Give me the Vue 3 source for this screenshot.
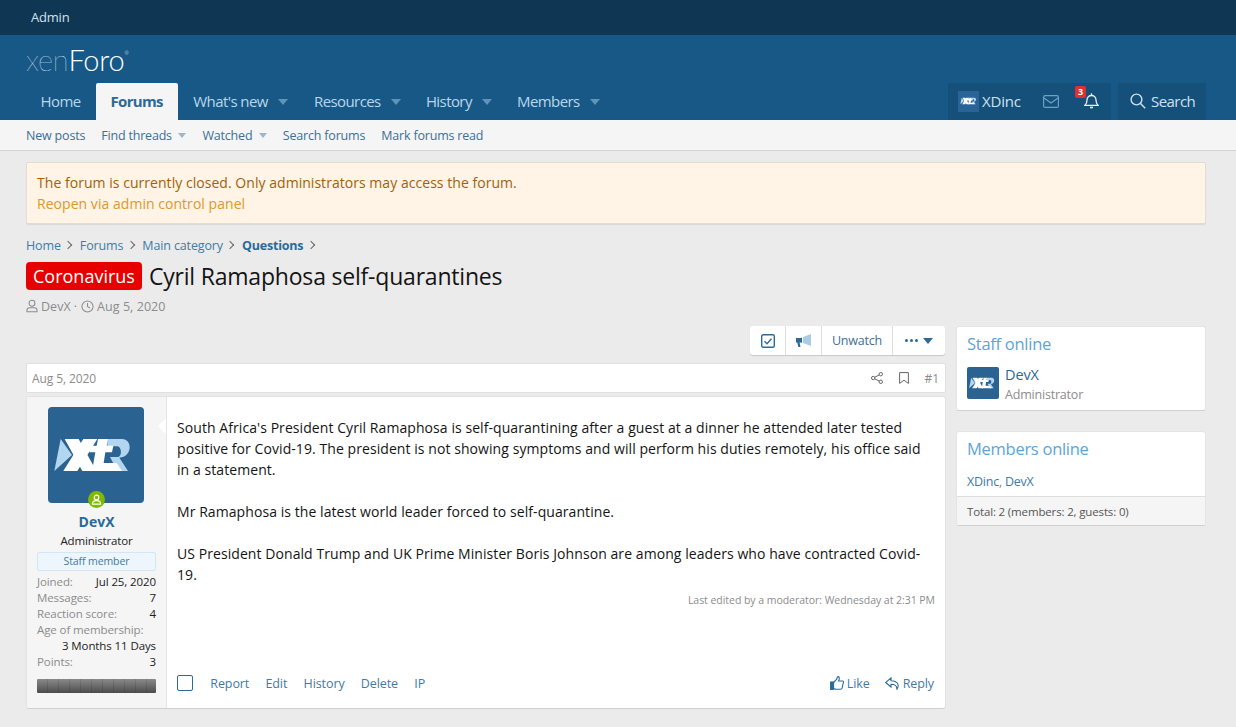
<script setup>
const nav = [
  { t: 'What\'s new' }, { t: 'Resources' }, { t: 'History' }, { t: 'Members' }
]
const stats = [
  ['Joined:', 'Jul 25, 2020'], ['Messages:', '7'], ['Reaction score:', '4']
]
</script>

<template>
  <div class="page">
    <div class="topbar"><span class="admin">Admin</span></div>
    <header class="head">
      <div class="logo"><span class="xen">xen</span>Foro<sup>®</sup></div>
      <div class="navrow">
        <nav class="nav">
          <a class="tab">Home</a>
          <a class="tab on">Forums</a>
          <a v-for="n in nav" :key="n.t" class="tab drop">{{ n.t }}<i class="caret"></i></a>
        </nav>
        <div class="tools">
          <div class="toolgrp">
            <span class="mini"><svg viewBox="0 0 288 288" width="20" height="20"><use href="#xtr" /></svg></span>
            <span class="uname">XDinc</span>
            <svg class="mail" width="16" height="13" viewBox="0 0 16 13" fill="none" stroke="#6f9fc2" stroke-width="1.2"><rect x=".6" y=".6" width="14.8" height="11.8" rx="1.5"/><path d="M1 3l7 5 7-5"/></svg>
            <span class="bell">
              <svg width="15" height="16" viewBox="0 0 15 16" fill="none" stroke="#e4eff7" stroke-width="1.3"><path d="M1 12.3c1.4-1.5 2-2.5 2-5.300 0-2.600 2-4.500 4.500-4.500S12 4.400 12 7c0 2.800.6 3.800 2 5.300z"/><path d="M6 14.500h3" stroke-width="1.600"/><path d="M7.500 .3v2"/></svg>
              <b class="badge">3</b>
            </span>
          </div>
          <div class="toolgrp search">
            <svg width="16" height="16" viewBox="0 0 16 16" fill="none" stroke="#cfe2f0" stroke-width="1.400"><circle cx="6.500" cy="6.500" r="5.400"/><path d="M10.500 10.500l4.700 4.700"/></svg>
            <span>Search</span>
          </div>
        </div>
      </div>
    </header>
    <div class="subnav">
      <a>New posts</a>
      <a class="d">Find threads<i class="caret small"></i></a>
      <a class="d">Watched<i class="caret small"></i></a>
      <a>Search forums</a>
      <a>Mark forums read</a>
    </div>

    <main class="body">
      <div class="notice">
        <div>The forum is currently closed. Only administrators may access the forum.</div>
        <a>Reopen via admin control panel</a>
      </div>

      <div class="crumbs">
        <a>Home</a><i class="sep"></i><a>Forums</a><i class="sep"></i><a>Main category</a><i class="sep"></i><a class="strong">Questions</a><i class="sep"></i>
      </div>
      <h1 class="title"><span class="label">Coronavirus</span><span>Cyril Ramaphosa self-quarantines</span></h1>
      <div class="desc">
        <svg width="12" height="14" viewBox="0 0 13 14" fill="none" stroke="#8c8c8c" stroke-width="1.100"><circle cx="6.500" cy="4" r="3.200"/><path d="M1 13.300v-1.500c0-2 1.500-3 3-3h5c1.500 0 3 1 3 3v1.500z"/></svg>
        <span>DevX</span><span class="dot">·</span>
        <svg width="13" height="13" viewBox="0 0 14 14" fill="none" stroke="#8c8c8c" stroke-width="1.100"><circle cx="7" cy="7" r="6"/><path d="M7 3.200V7l2.600 1.800"/></svg>
        <span>Aug 5, 2020</span>
      </div>

      <div class="cols">
        <div class="maincol">
          <div class="btnrow">
            <div class="btngrp">
              <span class="btn">
                <svg width="14" height="14" viewBox="0 0 14 14" fill="none" stroke="#2b6a99" stroke-width="1.400"><rect x=".7" y=".7" width="12.600" height="12.600" rx="1.500"/><path d="M3.500 7.200l2.500 2.500 4.500-5"/></svg>
              </span>
              <span class="btn">
                <svg width="16" height="14" viewBox="0 0 16 14"><path d="M0 4h5l1-.5V9L5 8.500H3.600L4.500 13H2.300L1.300 8.500H0z" fill="#2b6a99"/><path d="M7 3l8-3v12L7 9z" fill="#a9cbe3"/></svg>
              </span>
              <span class="btn txt">Unwatch</span>
              <span class="btn dots"><i></i><i></i><i></i><i class="caret dk"></i></span>
            </div>
          </div>

          <div class="posthead">
            <span class="pdate">Aug 5, 2020</span>
            <span class="pact">
              <svg width="12" height="12" viewBox="0 0 12 12" fill="none" stroke="#666" stroke-width="1"><circle cx="2.200" cy="6" r="1.700"/><circle cx="9.800" cy="2.200" r="1.700"/><circle cx="9.800" cy="9.800" r="1.700"/><path d="M3.800 5.200l4.500-2.300M3.800 6.800l4.500 2.300"/></svg>
              <svg width="10" height="12" viewBox="0 0 10 12" fill="none" stroke="#666" stroke-width="1"><path d="M.6.600h8.800v10.800L5 8.200.6 11.400z"/></svg>
              <span>#1</span>
            </span>
          </div>

          <article class="post">
            <aside class="user">
              <div class="avatar">
                <svg viewBox="0 0 288 288" width="96" height="96">
                  <defs>
                    <g id="xtr">
                      <path d="M19 192 38 96 72 144Z" fill="#b3d6f0"/>
                      <path d="M178 96H222C254 96 254 150 214 152L240 192H208L186 150H210C222 150 222 118 208 118H178Z" fill="#b3d6f0"/>
                      <path d="M50 96H92L145 192H103Z" fill="#fff"/>
                      <path d="M46 192H88L148 96H106Z" fill="#fff"/>
                      <path d="M150 96H180L176 116H196L192 136H172L167 168H206L222 192H132L142 136H124L128 116H146Z" fill="#fff"/>
                    </g>
                  </defs>
                  <use href="#xtr" />
                </svg>
                <span class="online"><svg width="12" height="12" viewBox="0 0 12 12" fill="none" stroke="#fff" stroke-width="1.300"><circle cx="6" cy="3.800" r="2.500"/><path d="M1.500 11c0-3 1.500-3.700 4.500-3.700s4.500.7 4.500 3.700z"/></svg></span>
              </div>
              <div class="name">DevX</div>
              <div class="role">Administrator</div>
              <div class="staff">Staff member</div>
              <dl class="stats">
                <div v-for="s in stats" :key="s[0]" class="st"><dt>{{ s[0] }}</dt><dd>{{ s[1] }}</dd></div>
                <div class="st"><dt>Age of membership:</dt></div>
                <div class="st end"><dd>3 Months 11 Days</dd></div>
                <div class="st"><dt>Points:</dt><dd>3</dd></div>
              </dl>
              <div class="meter"></div>
            </aside>
            <div class="content">
              <i class="arrow"></i>
              <div class="text">
                South Africa's President Cyril Ramaphosa is self-quarantining after a guest at a dinner he attended later tested positive for Covid-19. The president is not showing symptoms and will perform his duties remotely, his office said in a statement.<br><br>
                Mr Ramaphosa is the latest world leader forced to self-quarantine.<br><br>
                US President Donald Trump and UK Prime Minister Boris Johnson are among leaders who have contracted Covid-19.
              </div>
              <div class="edited">Last edited by a moderator: Wednesday at 2:31 PM</div>
              <div class="foot">
                <div class="fl">
                  <i class="check"></i>
                  <a>Report</a><a>Edit</a><a>History</a><a>Delete</a><a>IP</a>
                </div>
                <div class="fr">
                  <a class="ic">
                    <svg width="14" height="14" viewBox="0 0 14 14" fill="none" stroke="#2b6a99" stroke-width="1.100"><rect x=".6" y="6" width="3" height="7.400" fill="#2b6a99"/><path d="M3.600 6.500 6.500 3.500c.6-.8.500-2.800 1.600-2.900 1.600 0 1.500 2.600.4 4.400h4c1.200 0 1.300 1.300.7 2l-1 4.900c-.2.800-.7 1.400-1.600 1.400H6c-1 0-1.600-.6-2.400-.8"/></svg>Like</a>
                  <a class="ic">
                    <svg width="15" height="13" viewBox="0 0 15 13" fill="none" stroke="#2b6a99" stroke-width="1.100"><path d="M6 .8.700 5.500 6 10V7.300c3.500 0 5.500.5 6 4.900 1.800-2.800 2.400-8-6-8.500z"/></svg>Reply</a>
                </div>
              </div>
            </div>
          </article>
        </div>

        <aside class="side">
          <section class="block">
            <h3>Staff online</h3>
            <div class="staffrow">
              <span class="sav"><svg viewBox="0 0 288 288" width="32" height="32"><use href="#xtr" /></svg></span>
              <div>
                <div class="sname">DevX</div>
                <div class="srole">Administrator</div>
              </div>
            </div>
          </section>
          <section class="block second">
            <h3>Members online</h3>
            <div class="mem"><a>XDinc</a>, <a>DevX</a></div>
            <div class="total">Total: 2 (members: 2, guests: 0)</div>
          </section>
        </aside>
      </div>
    </main>
  </div>
</template>

<style scoped>
.page { font-family: "Open Sans", "Noto Sans", sans-serif; font-size: 13px; color: #141414; background: #ebebeb; overflow: hidden; height: 727px; }
a { color: #2577b1; }
.topbar { height: 35px; box-sizing: border-box; padding: 0 0 1px 31px; background: #0f3652; display: flex; align-items: center; color: #cfe3f1; font-size: 13px; letter-spacing: -.2px; }
.head { background: #185886; height: 85px; display: flex; flex-direction: column; }
.logo { height: 48px; padding: 10px 0 0 26px; box-sizing: border-box; font-family: Lato, sans-serif; font-weight: 300; font-size: 29px; line-height: 30px; color: #fff; letter-spacing: -.2px; }
.logo .xen { font-weight: 100; }
.logo sup { font-size: 5px; line-height: 0; vertical-align: 16px; }
.navrow { height: 37px; display: flex; justify-content: space-between; padding: 0 30px 0 26px; }
.nav { display: flex; }
.tab { font-size: 15px; letter-spacing: -.58px; color: #b9d7ec; padding: 0 15px 0 14.500px; line-height: 37px; display: flex; align-items: center; }
.tab.on { background: #f5f5f5; color: #2a6a97; font-weight: 700; border-radius: 2px 2px 0 0; padding: 0 15px; letter-spacing: -.7px; }
.tab.drop { padding: 0 10.200px 0 15px; }
.tab.drop:nth-child(3) { padding-left: 15.500px; }
.tab.drop:nth-child(4) { padding-left: 16px; }
.caret { display: inline-block; width: 0; height: 0; border: 5px solid transparent; border-top: 6px solid #5f93b8; border-bottom: 0; margin-left: 10px; }
.caret.small { border-width: 4px; border-top: 5px solid #9db6c9; border-bottom: 0; margin-left: 6.500px; }
.caret.dk { border-top-color: #2b6a99; margin-left: 3px; }
.tools { display: flex; gap: 7px; }
.toolgrp { background: #15507b; border-radius: 2px 2px 0 0; display: flex; align-items: center; color: #cfe2f0; font-size: 15px; letter-spacing: -.55px; padding-bottom: 1px; box-sizing: border-box; }
.toolgrp:first-child { width: 163px; padding-left: 10px; }
.mini { width: 21px; height: 21px; background: #2a6496; display: flex; align-items: center; justify-content: center; margin-right: 3px; }
.uname { width: 61px; letter-spacing: -.2px; }
.mail { margin-right: 25px; }
.bell { position: relative; display: flex; }
.badge { position: absolute; left: -9px; top: -7px; background: #e03030; color: #fff; font-size: 9px; font-weight: 700; line-height: 12px; width: 11px; text-align: center; border-radius: 2px; letter-spacing: 0; }
.search { width: 88px; padding-left: 12px; gap: 5px; }
.subnav { height: 30px; background: #f5f5f5; border-bottom: 1px solid #d3d3d3; display: flex; align-items: center; padding-left: 26px; gap: 16px; font-size: 12.500px; letter-spacing: -.19px; }
.subnav a { color: #3d6f96; display: flex; align-items: center; }
.body { padding: 11px 30px 0 26px; }
.notice { height: 62px; box-sizing: border-box; background: #fff4e5; border: 1px solid #e4dccc; border-radius: 2px; box-shadow: 0 1px 1px rgba(0,0,0,.08); padding: 9px 10px; font-size: 14px; line-height: 21px; letter-spacing: .04px; color: #a3610b; }
.notice a { color: #e2962e; }
.crumbs { display: flex; align-items: center; margin-top: 12px; height: 18px; font-size: 12.500px; letter-spacing: -.13px; }
.crumbs a { color: #3f7ba6; }
.crumbs .strong { color: #2a6a97; font-weight: 700; letter-spacing: -.2px; }
.sep { width: 5px; height: 5px; border-top: 1px solid #666; border-right: 1px solid #666; transform: rotate(45deg); margin: 0 8.500px 0 4.500px; }
.title { margin: 6px 0 0; height: 32px; display: flex; align-items: center; font-weight: 400; font-size: 23px; line-height: 28px; color: #141414; letter-spacing: -.2px; }
.label { background: #e60000; color: #fff; border-radius: 4px; font-size: 18px; letter-spacing: 0; line-height: 28px; padding: 0 7px; margin-right: 7px; }
.desc { display: flex; align-items: center; gap: 3px; margin-top: 4px; height: 20px; color: #8c8c8c; font-size: 12.500px; letter-spacing: .05px; }
.dot { margin: 0 1px 0 0; }
.cols { display: flex; gap: 10px; margin-top: 10px; }
.maincol { width: 920px; }
.btnrow { display: flex; justify-content: flex-end; height: 29px; padding-right: 1px; }
.btngrp { display: flex; background: #fff; border-radius: 3px; box-shadow: 0 1px 1px rgba(0,0,0,.15); }
.btn { display: flex; align-items: center; justify-content: center; border-left: 1px solid #dedede; box-sizing: border-box; color: #3d6f96; font-size: 12.500px; letter-spacing: -.2px; }
.btn:nth-child(1) { width: 35px; border-left: 0; }
.btn:nth-child(2) { width: 36px; }
.btn:nth-child(3) { width: 71px; }
.btn:nth-child(4) { width: 53px; }
.dots i:not(.caret) { width: 3px; height: 3px; border-radius: 50%; background: #2b6a99; margin-right: 2px; }
.posthead { margin-top: 8px; height: 30px; box-sizing: border-box; background: #fff; border: 1px solid #e0e0e0; border-radius: 2px; display: flex; justify-content: space-between; align-items: center; padding: 0 6px 0 5px; font-size: 12px; color: #8c8c8c; letter-spacing: -.1px; }
.pact { display: flex; align-items: center; gap: 16px; }
.post { margin-top: 3px; height: 313px; box-sizing: border-box; display: flex; background: #fff; border: 1px solid #e2e2e2; border-bottom-color: #d0d0d0; border-radius: 3px; }
.user { width: 140px; box-sizing: border-box; background: #f5f5f5; border-right: 1px solid #e4e4e4; padding: 10px 10px 0 10px; display: flex; flex-direction: column; align-items: stretch; border-radius: 3px 0 0 3px; }
.avatar { position: relative; width: 96px; height: 96px; margin-left: 11px; background: #2a6291; border-radius: 4px; }
.avatar svg { display: block; }
.online { position: absolute; left: 39.500px; bottom: -5px; width: 17px; height: 17px; border-radius: 50%; background: #7fb900; display: flex; align-items: center; justify-content: center; }
.avatar .online svg { width: 11px; height: 11px; }
.name { text-align: center; color: #2a6a97; font-weight: 700; font-size: 14px; line-height: 20px; margin-top: 9px; }
.role { text-align: center; font-size: 11.500px; line-height: 18px; color: #222; letter-spacing: -.15px; }
.staff { margin-top: 2px; height: 19px; box-sizing: border-box; background: #edf6fd; border: 1px solid #d3e6f5; border-radius: 2px; text-align: center; color: #3f7ba6; font-size: 10.500px; line-height: 17px; letter-spacing: -.1px; }
.stats { margin: 3px 0 0; font-size: 11.500px; line-height: 16px; letter-spacing: -.1px; color: #222; }
.st { display: flex; justify-content: space-between; }
.st.end { justify-content: flex-end; }
.st dt { color: #8c8c8c; }
.st dd { margin: 0; }
.meter { margin-top: 9px; height: 14px; background: repeating-linear-gradient(90deg, transparent 0 10px, rgba(0,0,0,.1) 10px 11px), linear-gradient(#8a8a8a, #4c4c4c); border-radius: 1px; }
.content { position: relative; flex: 1; padding: 20px 10px 0 10px; display: flex; flex-direction: column; min-width: 0; }
.arrow { position: absolute; left: -9px; top: 21px; width: 0; height: 0; border: 8px solid transparent; border-left: 0; border-right: 8px solid #fff; }
.text { font-size: 14px; line-height: 21px; letter-spacing: .07px; color: #141414; }
.edited { text-align: right; margin-top: 7px; font-size: 10.500px; line-height: 16px; color: #8c8c8c; letter-spacing: -.04px; }
.foot { margin-top: auto; height: 50px; display: flex; justify-content: space-between; align-items: center; font-size: 12.500px; letter-spacing: -.1px; }
.foot a { color: #3f7ba6; }
.fl { display: flex; align-items: center; gap: 16.300px; }
.check { display: block; width: 14px; height: 14px; border: 1.500px solid #2b6a99; border-radius: 2px; margin-right: 1px; }
.fr { display: flex; gap: 15px; padding-right: 1px; }
.ic { display: flex; align-items: center; gap: 3px; }
.side { width: 250px; }
.block { background: #fff; border: 1px solid #e4e4e4; border-bottom-color: #d0d0d0; border-radius: 3px; height: 85px; box-sizing: border-box; padding-top: 5px; overflow: hidden; }
.block.second { margin-top: 20px; height: 95px; }
h3 { margin: 0; padding-left: 10px; font-weight: 400; font-size: 16.500px; line-height: 24px; color: #5ea4d6; letter-spacing: -.27px; }
.staffrow { display: flex; gap: 6px; padding: 11px 10px 0; }
.sav { width: 32px; height: 32px; background: #2a6291; border-radius: 2px; display: block; }
.sav svg { display: block; }
.sname { font-size: 14.500px; line-height: 19px; color: #2a6a97; letter-spacing: -.1px; margin-top: -2px; }
.srole { font-size: 12.500px; line-height: 22px; color: #8c8c8c; letter-spacing: -.2px; }
.mem { padding: 12px 10px 0; font-size: 12.500px; line-height: 18px; color: #8c8c8c; letter-spacing: -.24px; height: 23px; }
.mem a { color: #3f7ba6; }
.total { height: 29px; border-top: 1px solid #dedede; background: #f5f5f5; padding: 7px 10px 0; box-sizing: border-box; font-size: 11.500px; color: #555; letter-spacing: -.15px; }
</style>
